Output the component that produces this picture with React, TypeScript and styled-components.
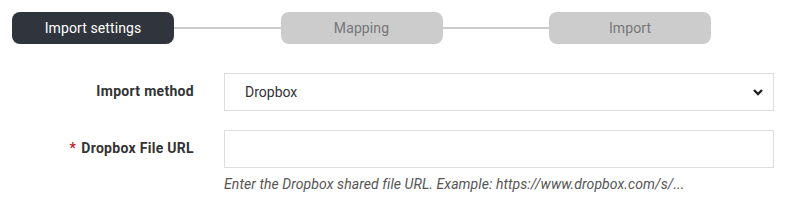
import React from "react";
import styled, { createGlobalStyle } from "styled-components";

const Global = createGlobalStyle`
  html, body { margin: 0; padding: 0; background: #fff; }
  body { font-family: Roboto, "Liberation Sans", sans-serif; color: #333; }
  * { box-sizing: border-box; }
`;

const Page = styled.div`
  width: 800px;
  height: 200px;
  padding: 12px 26px 0 12px;
`;

const Steps = styled.div`
  display: flex;
  align-items: center;
  width: 699px;
`;

const Step = styled.div<{ $active?: boolean }>`
  flex: 0 0 162px;
  height: 32px;
  border-radius: 8px;
  display: flex;
  align-items: center;
  justify-content: center;
  font-size: 14px;
  letter-spacing: 0.1px;
  background: ${(p) => (p.$active ? "#30343c" : "#cccccc")};
  color: ${(p) => (p.$active ? "#ffffff" : "#777777")};
`;

const Connector = styled.div`
  flex: 1;
  height: 2px;
  background: #cccccc;
`;

const Form = styled.div`
  margin-top: 29px;
  display: grid;
  grid-template-columns: 182px 550px;
  column-gap: 30px;
  row-gap: 19px;
  align-items: start;
`;

const Label = styled.label`
  text-align: right;
  font-size: 14px;
  font-weight: 700;
  letter-spacing: 0.3px;
  color: #333;
  padding-top: 10px;
  line-height: 16px;
`;

const Required = styled.span`
  color: #c0272d;
  margin-right: 5px;
`;

const Field = styled.div`
  position: relative;
  display: flex;
  flex-direction: column;
`;

const Select = styled.select`
  appearance: none;
  -webkit-appearance: none;
  width: 100%;
  height: 38px;
  border: 1px solid #dddddd;
  background: #fff;
  padding: 0 30px 0 20px;
  font-family: inherit;
  font-size: 14px;
  color: #333;
  outline: none;
  border-radius: 0;
`;

const Chevron = styled.svg`
  position: absolute;
  right: 10px;
  top: 14px;
  width: 12px;
  height: 10px;
  pointer-events: none;
`;

const Input = styled.input`
  width: 100%;
  height: 38px;
  border: 1px solid #dddddd;
  background: #fff;
  padding: 0 12px;
  font-family: inherit;
  font-size: 14px;
  outline: none;
`;

const Help = styled.div`
  margin-top: 8px;
  font-size: 14px;
  font-style: italic;
  letter-spacing: 0.08px;
  color: #555;
`;

export default function App() {
  return (
    <>
      <Global />
      <Page>
        <Steps>
          <Step $active>Import settings</Step>
          <Connector />
          <Step>Mapping</Step>
          <Connector />
          <Step>Import</Step>
        </Steps>
        <Form>
          <Label>Import method</Label>
          <Field>
            <Select defaultValue="dropbox">
              <option value="dropbox">Dropbox</option>
            </Select>
            <Chevron viewBox="0 0 12 10">
              <path d="M2 3 L6 7 L10 3" stroke="#222" strokeWidth="2.4" fill="none" />
            </Chevron>
          </Field>
          <Label>
            <Required>*</Required>Dropbox File URL
          </Label>
          <Field>
            <Input type="text" />
            <Help>Enter the Dropbox shared file URL. Example: https://www.dropbox.com/s/...</Help>
          </Field>
        </Form>
      </Page>
    </>
  );
}
